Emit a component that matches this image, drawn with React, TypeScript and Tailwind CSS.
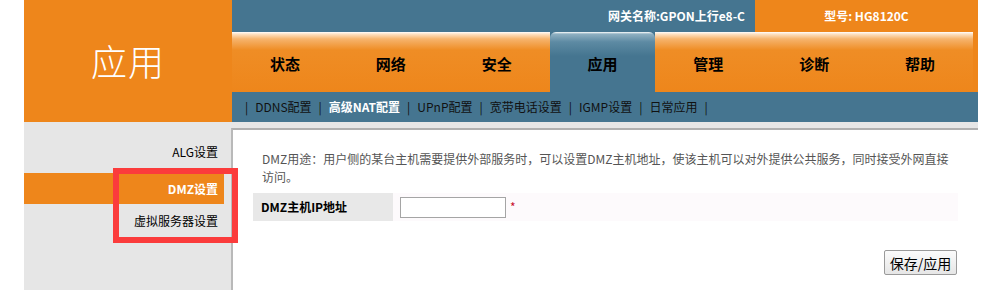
import React from "react";

const tabs = ["状态", "网络", "安全", "应用", "管理", "诊断", "帮助"];
const subs = ["DDNS配置", "高级NAT配置", "UPnP配置", "宽带电话设置", "IGMP设置", "日常应用"];

export default function App() {
  return (
    <div
      className="relative w-[990px] h-[290px] bg-white overflow-hidden"
      style={{ fontFamily: '"Noto Sans CJK SC", "Liberation Sans", sans-serif' }}
    >
      <div className="ml-[24px] w-[954px]">
        {/* header */}
        <div className="flex h-[122px]">
          <div className="w-[208px] bg-[#ee861b] flex items-center justify-center text-white text-[36px] font-light tracking-[1px] pb-[2px]">
            应用
          </div>
          <div className="w-[746px] flex flex-col">
            <div className="h-[32px] flex">
              <div className="flex-1 bg-[#457590] flex items-center justify-end pr-[10px] text-white text-[12px] font-bold">
                网关名称:GPON上行e8-C
              </div>
              <div className="w-[223px] bg-[#ee861b] flex items-center justify-center text-white text-[12px] font-bold">
                型号: HG8120C
              </div>
            </div>
            <div className="h-[60px] flex bg-[#ee861b]">
              <div className="w-[741px] grid grid-cols-7 bg-[#457590]">
                {tabs.map((t) =>
                  t === "应用" ? (
                    <div
                      key={t}
                      className="flex items-center justify-center pt-[4px] text-[15px] font-bold text-black rounded-t-[6px] bg-[linear-gradient(to_bottom,#ffffff_0px,#8fb0c2_2px,#5d8aa3_10px,#457590_40%)]"
                    >
                      {t}
                    </div>
                  ) : (
                    <div
                      key={t}
                      className="flex items-center justify-center pt-[4px] text-[15px] font-bold text-black bg-[linear-gradient(to_bottom,#ffffff_0px,#fde2c4_2px,#f6b46d_7px,#ef8d25_18px,#ee861b_100%)]"
                    >
                      {t}
                    </div>
                  )
                )}
              </div>
            </div>
            <div className="h-[30px] bg-[#457590] flex items-center pl-[6px] text-[12px] text-[#111]">
              {subs.map((s) => (
                <React.Fragment key={s}>
                  <span className="mx-[7px]">|</span>
                  <span className={s === "高级NAT配置" ? "text-white font-bold" : ""}>{s}</span>
                </React.Fragment>
              ))}
              <span className="mx-[7px]">|</span>
            </div>
          </div>
        </div>

        {/* body */}
        <div className="h-[6px] bg-[#e6e6e6]" />
        <div className="flex h-[162px]">
          <div className="w-[207px] bg-[#e6e6e6] flex flex-col text-[12px] text-black">
            <div className="h-[45px] flex items-center justify-end pr-[13px] pt-[3px]">ALG设置</div>
            <div className="h-[31px] w-[200px] bg-[#ee861b] flex items-center justify-end pr-[6px] text-white font-bold">
              DMZ设置
            </div>
            <div className="h-[34px] flex items-center justify-end pr-[13px]">虚拟服务器设置</div>
          </div>
          <div className="flex-1 bg-white border-l-[2px] border-t-[2px] border-l-[#b9b9b9] border-t-[#b0b0b0] pl-[29px] pt-[20px] pr-[20px] flex flex-col">
            <div className="text-[12px] leading-[18px] text-[#555]">
              <div>DMZ用途：用户侧的某台主机需要提供外部服务时，可以设置DMZ主机地址，使该主机可以对外提供公共服务，同时接受外网直接</div>
              <div>访问。</div>
            </div>
            <div className="mt-[7px] ml-[-9px] h-[28px] flex items-center bg-[#fdfafc]">
              <div className="w-[140px] h-full bg-[#e8e8e8] flex items-center pl-[8px] text-[12px] font-bold text-black">
                DMZ主机IP地址
              </div>
              <input
                className="ml-[7px] w-[106px] h-[21px] border border-[#a5a5a5] bg-white outline-none"
                defaultValue=""
              />
              <span className="ml-[4px] text-[#c8102e] text-[12px]">*</span>
            </div>
            <div className="flex justify-end mt-[29px] pr-[1px]">
              <button className="w-[73px] h-[25px] border border-[#9a9a9a] rounded-[2px] bg-[linear-gradient(to_bottom,#fbfbfb,#e6e6e6)] text-[14px] text-black leading-none">
                保存/应用
              </button>
            </div>
          </div>
        </div>
      </div>

      {/* annotation */}
      <div className="absolute left-[113px] top-[168px] w-[125px] h-[75px] border-[6px] border-[#fb3c3c]" />
    </div>
  );
}
